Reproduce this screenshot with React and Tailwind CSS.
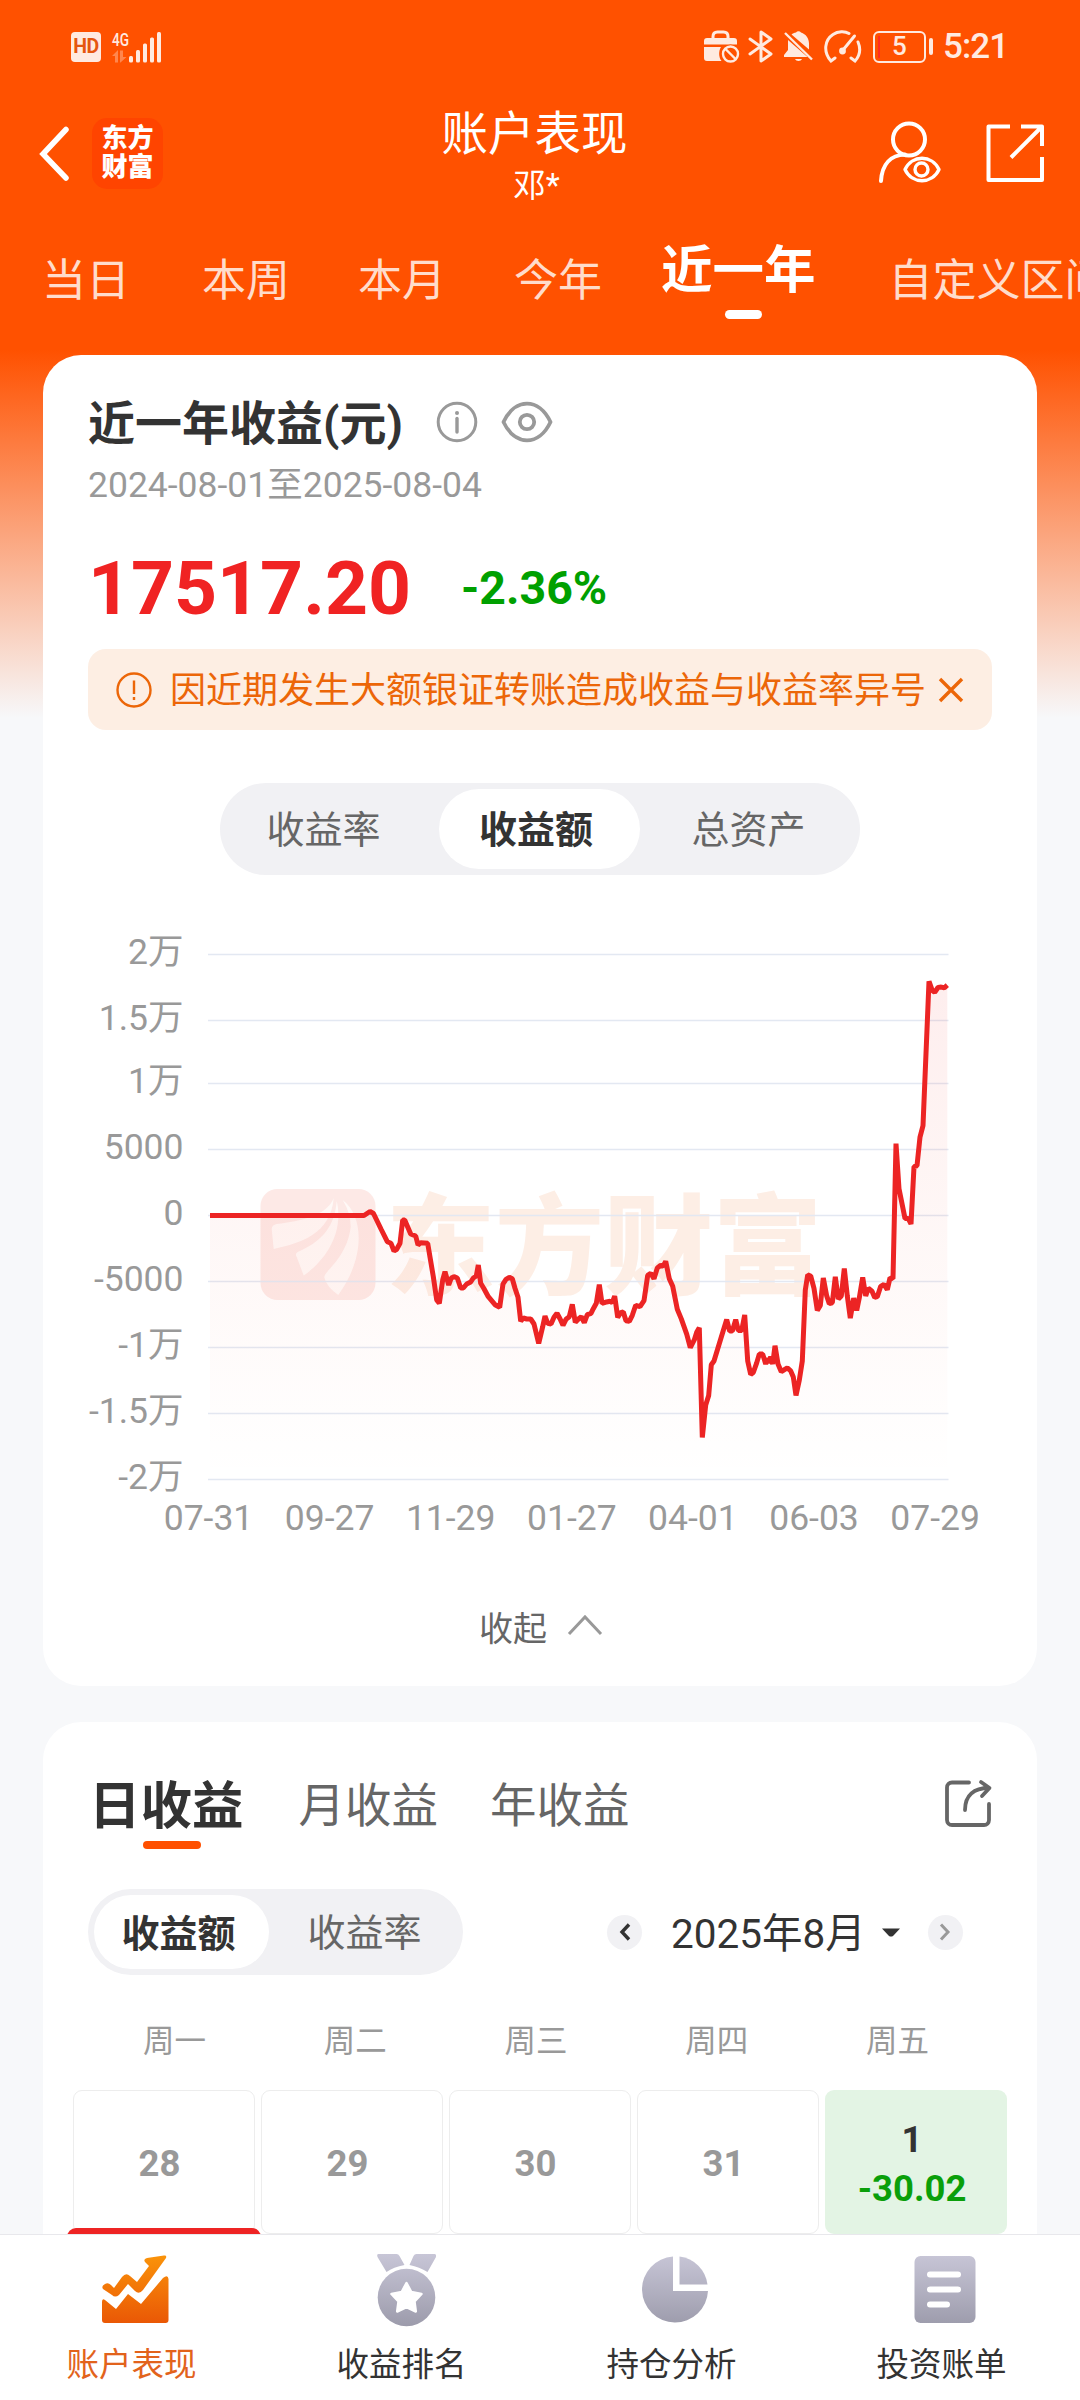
import React from "react";

const DAY_LINE = [
  [210, 1215.5], [364, 1215.5], [370, 1211.5], [373.5, 1213.5], [381, 1229],
  ...[[22,275],[33,280],[42,303],[50,298],[60,280],[68,210],[74,210],[92,252],[107,258],[114,285],[122,278],[143,280],[160,380],[170,450],[178,460],[188,390],[195,365],[206,405],[214,384],[222,380],[232,384],[242,414],[250,414],[260,402],[272,396],[280,384],[289,378],[295,345],[302,400],[312,416],[325,440],[345,464],[359,472],[369,402],[378,388],[388,382],[397,386],[405,415],[414,442],[422,514],[430,504],[440,507],[452,507],[462,522],[476,580],[488,530],[495,498],[503,520],[513,522],[522,502],[531,490],[540,506],[549,526],[558,508],[568,500],[577,463],[586,517],[596,506],[604,500],[613,518],[622,494],[633,490],[640,476],[649,460],[658,404],[666,460],[676,457],[690,454],[697,458],[704,438],[713,502],[722,488],[730,486],[738,512],[748,514],[757,496],[767,466],[780,470],[792,452],[803,376],[812,370],[822,386],[832,354],[842,346],[850,348],[857,334]].map(([x, y]) => [380 + x / 3, 1150 + y / 3]),
  ...[[28,885],[38,905],[52,965],[64,990],[80,1030],[91,1065],[103,1045],[110,1025],[118,1013],[127,1300],[137,1215],[146,1190],[154,1110],[162,1100],[190,1020],[200,992],[209,1022],[217,1022],[227,992],[235,1020],[245,1020],[254,980],[263,1100],[272,1135],[280,1130],[290,1105],[298,1082],[308,1082],[317,1108],[323,1093],[329,1105],[332,1088],[338,1108],[345,1060],[354,1108],[364,1128],[382,1118],[392,1126],[400,1142],[408,1190],[418,1150],[427,1100],[436,915],[443,875],[452,878],[462,910],[472,968],[481,955],[490,883],[500,930],[508,950],[517,948],[526,880],[535,938],[544,930],[553,858],[562,930],[571,988],[581,936],[590,968],[598,935],[608,882],[617,930],[625,910],[636,918],[644,934],[652,932],[662,905],[672,900],[682,914],[690,883],[699,885],[708,532],[717,650],[735,728],[745,728],[753,742],[762,592],[771,590],[780,515],[789,485],[807,108],[817,132],[824,137],[834,124],[844,123],[853,125],[862,118]].map(([x, y]) => [660 + x / 3, 940 + y / 2.613]),
];

const LINE_D = DAY_LINE.map(([x, y], i) => `${i ? "L" : "M"}${x.toFixed(1)} ${y.toFixed(1)}`).join("");
const AREA_D = `${LINE_D}L947.3 1479L210 1479Z`;

const Y_LABELS = [["2万", 954.5], ["1.5万", 1020.5], ["1万", 1083.5], ["5000", 1149.5], ["0", 1215.5], ["-5000", 1281.5], ["-1万", 1347.5], ["-1.5万", 1413.5], ["-2万", 1479.5]];
const X_LABELS = ["07-31", "09-27", "11-29", "01-27", "04-01", "06-03", "07-29"];

function StatusBar() {
  return (
    <div className="flex h-[93px] items-center text-[#ffeae0]">
      <div className="ml-[71px] flex h-[30px] w-[30px] items-center justify-center rounded-[4px] bg-[#ffeae0] text-[19.5px] font-bold leading-none tracking-[-0.5px] text-[#e5560f]">HD</div>
      <svg className="ml-[11px] overflow-visible" width="50" height="32" viewBox="0 0 50 32" fill="#ffeae0">
        <text x="0" y="14.5" fontSize="19" fontWeight="500" fontFamily="Roboto" textLength="17" lengthAdjust="spacingAndGlyphs">4G</text>
        <g opacity=".35">
          <path d="M0 25L6 19V31.500H3V25zM8 19.500h3V26h3.500L8.500 31.500H8z" />
        </g>
        <rect x="17" y="25" width="4" height="6.500" rx="1.500" />
        <rect x="24" y="19" width="4" height="12.500" rx="1.500" />
        <rect x="31" y="12.500" width="4" height="19" rx="1.500" />
        <rect x="38" y="6.500" width="4" height="25" rx="1.500" />
        <rect x="45" y="1" width="4" height="30.500" rx="1.500" />
      </svg>
      <svg className="ml-[542px]" width="36" height="33" viewBox="0 0 36 33" fill="none">
        <path d="M9 10V6.500C9 3.500 10.500 2 13.500 2h6C22.500 2 24 3.500 24 6.500V10" stroke="#ffeae0" strokeWidth="3" />
        <path d="M3 8h27a3 3 0 0 1 3 3v3.500H0V11a3 3 0 0 1 3-3zM0 17h17c-2.500 4-2.500 10 .5 14H3a3 3 0 0 1-3-3z" fill="#ffeae0" />
        <circle cx="26.500" cy="24" r="9.500" fill="#ff5100" />
        <circle cx="26.500" cy="24" r="7.500" stroke="#ffeae0" strokeWidth="2.400" />
        <path d="M21.500 19l10 10" stroke="#ffeae0" strokeWidth="2.400" />
      </svg>
      <svg className="ml-[8px]" width="26" height="33" viewBox="0 0 26 33" fill="none" stroke="#ffeae0" strokeWidth="3" strokeLinejoin="round" strokeLinecap="round">
        <path d="M2 9l21 15-10 7V2l10 7L2 24" />
      </svg>
      <svg className="ml-[10px]" width="30" height="33" viewBox="0 0 30 33">
        <path d="M12 2.500a3 3 0 0 1 5 0c5 1.500 8 6 8 11v6L7.500 4.500c1.200-1 2.800-1.700 4.500-2zM4 10L23.500 27H0v-2l4-5zM11 29h7c-1 2.500-6 2.500-7 0z" fill="#ffeae0" />
        <path d="M1 3l27 26.500" stroke="#ffeae0" strokeWidth="2.400" />
      </svg>
      <svg className="ml-[10px]" width="38" height="33" viewBox="0 0 38 33" fill="none" stroke="#ffeae0" strokeLinecap="round">
        <path d="M11 28l-4 3C-1 22 .5 10 9 4.500c5-3.500 12-3.500 16-1M34 12c3 7 1.500 14-3 19l-4-3" strokeWidth="3" />
        <path d="M19 20L30.500 6" strokeWidth="3" />
        <circle cx="18.500" cy="21" r="3.400" fill="#ffeae0" stroke="none" />
      </svg>
      <div className="ml-[11px] flex h-[32px] w-[53px] items-center rounded-[6px] border-[2.500px] border-[#ffeae0] text-[26px] font-medium leading-none">
        <span className="ml-[3px] h-[22px] w-[2px] bg-[#ff2d20]" />
        <span className="-mt-px ml-[12px]">5</span>
      </div>
      <div className="ml-[3px] h-[17px] w-[4px] rounded-[2px] bg-[#ffeae0]" />
      <div className="ml-[10px] text-[35px] font-medium leading-none tracking-[-0.9px]">5:21</div>
    </div>
  );
}

function Header() {
  return (
    <div className="flex h-[120px] items-center text-white">
      <svg className="ml-[37px]" width="34" height="58" viewBox="0 0 34 58" fill="none" stroke="#fff" strokeWidth="5.500" strokeLinecap="round" strokeLinejoin="miter">
        <path d="M29 5.500L6 30L29 54" />
      </svg>
      <div className="ml-[21px] flex h-[71px] w-[71px] flex-col items-center justify-center rounded-[15px] bg-[#ff4400] text-[26px] font-black leading-[29.500px]">
        <span>东方</span>
        <span>财富</span>
      </div>
      <div className="ml-[278px] flex w-[187px] flex-col items-center pt-[11px]">
        <div className="whitespace-nowrap text-[46.500px] leading-[55px]">账户表现</div>
        <div className="pl-[4px] text-[32.500px] leading-[48px]">邓*</div>
      </div>
      <svg className="ml-[249px]" width="64" height="64" viewBox="0 0 64 64" fill="none" stroke="#fff" strokeWidth="4" strokeLinecap="round">
        <circle cx="32" cy="18.500" r="16" />
        <path d="M4 60c1-17 10-26 24-26.500" />
        <path d="M28 48.500c7-15 27-15 34 0c-7 15-27 15-34 0z" strokeWidth="3.400" strokeLinejoin="round" />
        <circle cx="44.500" cy="48.500" r="6.500" strokeWidth="3.400" />
      </svg>
      <svg className="ml-[44px]" width="60" height="60" viewBox="0 0 60 60" fill="none" stroke="#fff" strokeWidth="4" strokeLinejoin="round">
        <path d="M25 3.500H3.500v53.500H57V34M36 3.500H57V23M56 4.500L26 34.500" />
      </svg>
    </div>
  );
}

function RangeTabs() {
  return (
    <div className="flex h-[142px] items-start whitespace-nowrap text-[44px] leading-[60px] text-[#ffdccb]">
      <span className="ml-[42px] mt-[38px]">当日</span>
      <span className="ml-[72px] mt-[38px]">本周</span>
      <span className="ml-[68px] mt-[38px]">本月</span>
      <span className="ml-[68px] mt-[38px]">今年</span>
      <div className="ml-[59px] mt-[28px] flex flex-col items-center">
        <span className="text-[51.500px] font-bold leading-[60px] text-white">近一年</span>
        <span className="ml-[11px] mt-[9px] h-[9px] w-[37px] rounded-full bg-white" />
      </div>
      <span className="ml-[73px] mt-[38px]">自定义区间</span>
    </div>
  );
}

function Watermark() {
  return (
    <g>
      <rect x="260.500" y="1189" width="115" height="111" rx="17" fill="#fde9e6" />
      <g transform="translate(260.700 1189)" fill="#fff9f7">
        <path d="M73 9C66 27 40 32 16 35Q11 36 11 40L13 60C40 54 70 45 73 9Z" />
        <path d="M76 12C74 40 58 54 37 63Q34 65 36 68L43 86.500C62 74 84 46 76 12Z" />
        <path d="M82 11C104 28 104 70 77.600 106Q66 98 63.600 88.500C63 82 86 70 90 38Q90 24 82 11Z" />
      </g>
      <text x="386" y="1286" fontSize="109" fontWeight="900" fontFamily='"Noto Sans CJK SC", sans-serif' fill="#fdeee5">东方财富</text>
    </g>
  );
}

function ProfitChart() {
  return (
    <svg className="block" width="994" height="640" viewBox="43 920 994 640">
      <defs>
        <linearGradient id="profitFill" gradientUnits="userSpaceOnUse" x1="0" y1="980" x2="0" y2="1479">
          <stop offset="0" stopColor="#f02323" stopOpacity=".08" />
          <stop offset="1" stopColor="#f04c23" stopOpacity="0" />
        </linearGradient>
      </defs>
      <Watermark />
      {Y_LABELS.map(([label, y]) => (
        <g key={label}>
          <line x1="208" x2="948.500" y1={y} y2={y} stroke="#e3e8f2" strokeWidth="1.300" />
          <text x="183.500" y={y + 9} textAnchor="end" fontSize="35.500" fill="#999">{label}</text>
        </g>
      ))}
      <path d={AREA_D} fill="url(#profitFill)" />
      <path d={LINE_D} fill="none" stroke="#ec2424" strokeWidth="5" strokeLinejoin="bevel" />
      {X_LABELS.map((label, i) => (
        <text key={label} x={208.500 + i * 121.100} y="1530" textAnchor="middle" fontSize="35.500" fill="#999">{label}</text>
      ))}
    </svg>
  );
}

function SummaryCard() {
  return (
    <div className="mx-[43px] flex h-[1331px] flex-col rounded-[38px] bg-white">
      <div className="mt-[37px] flex h-[60px] items-center pl-[45px]">
        <span className="mt-[4px] text-[47px] font-bold leading-[60px] text-[#333]">近一年收益(元)</span>
        <svg className="ml-[33px]" width="42" height="42" viewBox="0 0 42 42" fill="none" stroke="#999" strokeWidth="3">
          <circle cx="21" cy="21" r="18.800" />
          <path d="M21 17.500V31" strokeWidth="3.400" strokeLinecap="round" />
          <circle cx="21" cy="12" r="2" fill="#999" stroke="none" />
        </svg>
        <svg className="ml-[23px]" width="52" height="42" viewBox="0 0 52 42" fill="none" stroke="#999" strokeWidth="3.800">
          <path d="M2.500 21C14-3.500 38-3.500 49.500 21C38 45.500 14 45.500 2.500 21Z" strokeLinejoin="round" />
          <circle cx="26" cy="21" r="7.200" />
        </svg>
      </div>
      <div className="mt-[8px] pl-[45px] text-[35.500px] leading-[50px] text-[#999]">2024-08-01至2025-08-04</div>
      <div className="mt-[33px] flex h-[90px] items-center pl-[45px] font-bold">
        <span className="text-[75px] leading-[90px] text-[#f02323]">17517.20</span>
        <span className="ml-[50px] text-[46.500px] leading-[90px] text-[#00a000]">-2.36%</span>
      </div>
      <div className="mx-[45px] mt-[16px] flex h-[81px] items-center rounded-[18px] bg-[#fdeee3] text-[#ec6608]">
        <svg className="ml-[28px]" width="36" height="36" viewBox="0 0 36 36" fill="none" stroke="#ec6608" strokeWidth="2.400">
          <circle cx="18" cy="18" r="16.500" />
          <path d="M18 8.500V22M18 25v3" />
        </svg>
        <span className="ml-[18px] mt-[3px] whitespace-nowrap text-[36px] leading-[50px]">因近期发生大额银证转账造成收益与收益率异号</span>
        <svg className="ml-[12px]" width="26" height="26" viewBox="0 0 26 26" stroke="#ec6608" strokeWidth="3.400">
          <path d="M2 2L24 24M24 2L2 24" />
        </svg>
      </div>
      <div className="mt-[53px] flex h-[92px] w-[640px] items-center self-center rounded-full bg-[#f1f1f4] p-[6px] text-[38px] text-[#666]">
        <span className="mt-[3px] w-[213px] pr-[18px] text-center">收益率</span>
        <span className="flex h-[80px] w-[201px] items-center justify-center rounded-full bg-white pr-[7px] pt-[3px] font-bold text-[#333]">收益额</span>
        <span className="mt-[3px] flex-1 pl-[3px] text-center">总资产</span>
      </div>
      <div className="mt-[45px]">
        <ProfitChart />
      </div>
      <div className="mt-[37px] flex items-center justify-center gap-[20px] pl-[2px] text-[34px] leading-[60px] text-[#666]">
        <span className="mt-[2px]">收起</span>
        <svg className="mb-[7px]" width="36" height="22" viewBox="0 0 36 22" fill="none" stroke="#999" strokeWidth="3">
          <path d="M2 20L18 3L34 20" />
        </svg>
      </div>
    </div>
  );
}

function CalendarCard() {
  return (
    <div className="mx-[43px] mt-[36px] h-[700px] rounded-[38px] bg-white">
      <div className="flex items-start pt-[52px] text-[46.500px] leading-[62px] text-[#666]">
        <div className="ml-[46px] flex flex-col items-center">
          <span className="translate-y-[2px] text-[51.500px] font-bold text-[#333]">日收益</span>
          <span className="ml-[12px] mt-[5px] h-[8px] w-[58px] rounded-full bg-[#ff5000]" />
        </div>
        <span className="ml-[55px] mt-[1px]">月收益</span>
        <span className="ml-[52px] mt-[1px]">年收益</span>
        <svg className="ml-[313px] mt-[4px]" width="50" height="50" viewBox="0 0 50 50" fill="none" stroke="#666" strokeWidth="3.800" strokeLinecap="round" strokeLinejoin="round">
          <path d="M26 4.500H9a5 5 0 0 0-5 5V42a5 5 0 0 0 5 5H41a5 5 0 0 0 5-5V26" />
          <path d="M22 32C22 17 31 10 46 10M38 4l8.500 6L39 18" />
        </svg>
      </div>
      <div className="mt-[40px] flex h-[86px] items-center">
        <div className="ml-[45px] flex h-[86px] w-[375px] items-center rounded-full bg-[#f1f1f4] p-[6px] text-[38px] text-[#666]">
          <span className="flex h-[74px] w-[175px] items-center justify-center rounded-full bg-white pr-[6px] pt-[4px] font-bold text-[#333]">收益额</span>
          <span className="mt-[3px] flex-1 pl-[3px] text-center">收益率</span>
        </div>
        <span className="ml-[144px] flex h-[35px] w-[35px] items-center justify-center rounded-full bg-[#f1f1f4]">
          <svg width="12" height="18" viewBox="0 0 12 18" fill="none" stroke="#333" strokeWidth="3.400"><path d="M10 1.500L3 9L10 16.500" /></svg>
        </span>
        <span className="ml-[29px] mt-[3px] text-[40.500px] leading-[60px] text-[#333]">2025年8月</span>
        <svg className="ml-[15px]" width="20" height="9" viewBox="0 0 20 9" fill="#333"><path d="M1 0.500H19L12 8Q10 9 8 8Z" /></svg>
        <span className="ml-[27px] flex h-[35px] w-[35px] items-center justify-center rounded-full bg-[#f1f1f4]">
          <svg width="12" height="18" viewBox="0 0 12 18" fill="none" stroke="#999" strokeWidth="3"><path d="M2 1.500L9 9L2 16.500" /></svg>
        </span>
      </div>
      <div className="ml-[41px] mt-[43px] grid w-[904px] grid-cols-5 text-center text-[31.500px] leading-[48px] text-[#999]">
        {["周一", "周二", "周三", "周四", "周五"].map((d) => <span key={d}>{d}</span>)}
      </div>
      <div className="mx-[30px] mt-[24px] grid grid-cols-5 gap-[6px] text-[36.500px] font-bold leading-[49px] text-[#999]">
        {["28", "29", "30", "31"].map((d) => (
          <div key={d} className="flex h-[144px] items-center justify-center rounded-[9px] border border-[#ededed] pr-[9px] pt-[3px]">{d}</div>
        ))}
        <div className="flex h-[144px] flex-col items-center justify-center rounded-[9px] bg-[#e3f4e4] pr-[8px] pt-[4px]">
          <span className="text-[#333]">1</span>
          <span className="text-[#0a9f0a]">-30.02</span>
        </div>
      </div>
      <div className="relative -mt-[6px] ml-[24px] h-[40px] w-[194px] rounded-t-[9px] bg-[#ee2424]" />
    </div>
  );
}

const GREY = "url(#navGrey)";

function ChartIcon() {
  return (
    <svg width="68" height="76" viewBox="0 0 68 76">
      <path d="M4 32Q7 30 10 33L13 36L21 25Q25 20 29 24L36 30L48 14L44 10Q42 7 46 6L63 3.500Q66 3 65 6L42 38Q38 43 34 39L27 32L18 43Q14 46 11 43L2 37Q0 34 4 32Z" fill="url(#navOrange)" />
      <path d="M1 50Q1 46 4 48L15 57L27 42L40 52L62 26Q67 22 67.500 27V68Q67.500 71 64.500 71H4Q1 71 1 68Z" fill="url(#navOrange)" />
    </svg>
  );
}

function MedalIcon() {
  return (
    <svg className="translate-x-[1.5px]" width="60" height="76" viewBox="0 0 60 76">
      <path d="M2 2H20Q22 2 23 4L28 13Q17 15 10 20L1 5Q0 2 2 2ZM40 2H58Q60 2 59.500 5L51 20Q43 15 33 13L37 4Q38 2 40 2Z" fill={GREY} />
      <circle cx="30" cy="45.500" r="28.800" fill={GREY} />
      <path d="M30 31L34.800 40L45 42L38 49.500L39.300 59.500L30 55L20.700 59.500L22 49.500L15 42L25.200 40Z" fill="#fff" stroke="#fff" strokeWidth="2.500" strokeLinejoin="round" />
    </svg>
  );
}

function PieIcon() {
  return (
    <svg width="68" height="76" viewBox="0 0 68 76">
      <path d="M32 4.500A33 33 0 1 0 67 39H32Z" fill={GREY} />
      <path d="M38.500 4.500A32 32 0 0 1 66.500 32.500H38.500Z" fill={GREY} />
    </svg>
  );
}

function BillIcon() {
  return (
    <svg width="62" height="76" viewBox="0 0 62 76">
      <rect x="0.500" y="4" width="61" height="67" rx="6" fill={GREY} />
      <path d="M16 22.500H44M16 37.500H44M16 52.500H33" stroke="#fff" strokeWidth="6" strokeLinecap="round" />
    </svg>
  );
}

function BottomNav() {
  const items = [["账户表现", ChartIcon], ["收益排名", MedalIcon], ["持仓分析", PieIcon], ["投资账单", BillIcon]];
  return (
    <div className="absolute inset-x-0 bottom-0 grid h-[166px] grid-cols-4 border-t border-[#e8e8ec] bg-white text-[32.500px] leading-[48px] text-[#333]">
      <svg className="absolute h-0 w-0">
        <defs>
          <linearGradient id="navGrey" gradientUnits="userSpaceOnUse" x1="0" y1="0" x2="0" y2="76"><stop stopColor="#c9c7d8" /><stop offset="1" stopColor="#9b9aaa" /></linearGradient>
          <linearGradient id="navOrange" gradientUnits="userSpaceOnUse" x1="0" y1="0" x2="0" y2="74"><stop stopColor="#fb960a" /><stop offset="1" stopColor="#e95505" /></linearGradient>
        </defs>
      </svg>
      {items.map(([label, Icon], i) => (
        <div key={label} className={i === 0 ? "flex flex-col items-center pt-[17px] text-[#e2631c]" : "flex flex-col items-center pt-[17px]"}>
          <Icon />
          <span className="mt-[13px] pr-[7px]">{label}</span>
        </div>
      ))}
    </div>
  );
}

export default function App() {
  return (
    <div className="relative h-[2400px] w-[1080px] overflow-hidden bg-[#f7f8fa] bg-[linear-gradient(to_bottom,#ff5100_0px,#ff5100_350px,#f7f8fa_718px)] font-['Roboto','Noto_Sans_CJK_SC',sans-serif]">
      <StatusBar />
      <Header />
      <RangeTabs />
      <SummaryCard />
      <CalendarCard />
      <BottomNav />
    </div>
  );
}
